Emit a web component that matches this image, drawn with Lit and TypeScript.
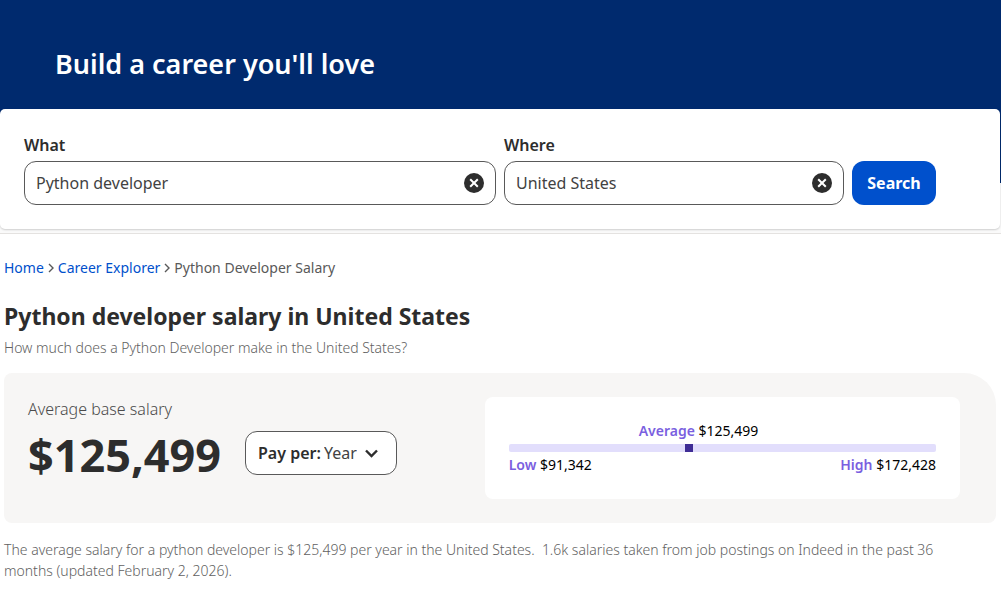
import { LitElement, html, css } from "lit";
import { customElement, state } from "lit/decorators.js";

const clearIcon = html`<svg class="clear-icon" viewBox="0 0 20 20" aria-hidden="true">
  <circle cx="10" cy="10" r="10" />
  <path d="M6.2 6.2l7.6 7.6M13.8 6.2l-7.6 7.6" />
</svg>`;

const crumbIcon = html`<svg class="crumb-icon" viewBox="0 0 6 10" aria-hidden="true">
  <path d="M1 1l4 4-4 4" />
</svg>`;

@customElement("app-root")
export class AppRoot extends LitElement {
  @state() what = "Python developer";
  @state() where = "United States";

  low = 91342;
  average = 125499;
  high = 172428;

  static styles = css`
    :host {
      display: block;
      min-height: 100vh;
      background: #fff;
      color: #2d2d2d;
      font-family: "Noto Sans", "Open Sans", sans-serif;
      font-size: 14px;
      line-height: 21px;
    }
    * {
      box-sizing: border-box;
    }
    h1, h2, p, ol {
      margin: 0;
      padding: 0;
    }
    input, select, button {
      font: inherit;
      color: inherit;
      margin: 0;
    }
    .masthead {
      background: #fafafa;
      padding-bottom: 4px;
      border-bottom: 1px solid #e4e2e0;
    }
    .hero {
      background: #002a6e;
      color: #fff;
      padding: 44px 55px 99px;
    }
    .hero-title {
      font-size: 27px;
      line-height: 40px;
      font-weight: 650;
    }
    .search {
      position: relative;
      display: grid;
      grid-template-columns: 118fr 85fr auto;
      align-items: end;
      gap: 8px;
      margin: -74px 1px 0 0;
      padding: 24px 64px 24px 24px;
      background: #fff;
      border-radius: 5px;
      box-shadow: 0 1px 2px rgba(0, 0, 0, 0.18);
    }
    .field {
      min-width: 0;
    }
    .field-label {
      display: block;
      font-size: 16px;
      line-height: 24px;
      font-weight: 600;
      padding-bottom: 4px;
    }
    .box {
      display: flex;
      align-items: center;
      height: 44px;
      padding: 0 11px;
      background: #fff;
      border: 1px solid #595959;
      border-radius: 12px;
    }
    .box-input {
      flex: 1;
      min-width: 0;
      padding: 0;
      border: 0;
      outline: 0;
      background: none;
      font-size: 16px;
      line-height: 24px;
      color: #424242;
    }
    .clear {
      display: flex;
      padding: 0;
      border: 0;
      background: none;
      cursor: pointer;
    }
    .clear-icon {
      width: 20px;
      height: 20px;
      fill: #2d2d2d;
    }
    .clear-icon path {
      stroke: #fff;
      stroke-width: 2;
    }
    .submit {
      min-width: 84px;
      height: 44px;
      padding: 0 15px;
      border: 0;
      border-radius: 12px;
      background: #0050cc;
      color: #fff;
      font-size: 16px;
      font-weight: 700;
      cursor: pointer;
    }
    .content {
      padding: 23px 5px 16px 4px;
    }
    .crumbs {
      display: flex;
      align-items: center;
      gap: 4px;
      list-style: none;
      color: #595959;
    }
    .crumb {
      display: flex;
      align-items: center;
      gap: 4px;
    }
    .crumb-link {
      color: #0050cc;
      text-decoration: none;
    }
    .crumb-icon {
      width: 6px;
      height: 10px;
      fill: none;
      stroke: #595959;
      stroke-width: 1.4;
    }
    .title {
      margin-top: 20px;
      font-size: 23px;
      line-height: 36px;
      font-weight: 700;
    }
    .muted {
      color: #616161;
      font-weight: 340;
    }
    .subtitle {
      margin-top: 3px;
    }
    .summary {
      padding-right: 36px;
    }
    .panel {
      display: grid;
      grid-template-columns: 49fr 51fr;
      align-items: start;
      margin: 15px 0 16px;
      padding: 24px 36px 24px 24px;
      background: #f7f6f5;
      border-radius: 8px 32px 8px 8px;
    }
    .base-label {
      font-size: 16px;
      line-height: 24px;
      font-weight: 340;
      color: #4b4b4b;
    }
    .base-row {
      display: flex;
      align-items: flex-start;
      gap: 24px;
    }
    .amount {
      font-size: 45px;
      line-height: 68px;
      font-weight: 700;
    }
    .pay {
      display: flex;
      align-items: center;
      position: relative;
      height: 44px;
      margin-top: 10px;
      padding-left: 12px;
      background: #fff;
      border: 1px solid #595959;
      border-radius: 12px;
      font-size: 16px;
      line-height: 24px;
    }
    .pay-label {
      font-weight: 600;
    }
    .pay-select {
      appearance: none;
      height: 100%;
      padding: 0 39px 0 3px;
      border: 0;
      outline: 0;
      background: none;
      color: #424242;
    }
    .pay-chevron {
      position: absolute;
      right: 18px;
      width: 13px;
      height: 9px;
      fill: none;
      stroke: #2d2d2d;
      stroke-width: 2.4;
      pointer-events: none;
    }
    .range {
      padding: 24px;
      background: #fff;
      border-radius: 8px;
      color: #000;
      line-height: 20px;
    }
    .range-average {
      width: max-content;
      margin-left: calc(var(--average) - 50px);
    }
    .name {
      color: #7a5fe0;
      font-weight: 600;
    }
    .track {
      display: flex;
      height: 8px;
      margin: 3px 0;
      border-radius: 2px;
      background: #e2defc;
    }
    .marker {
      width: 8px;
      margin-left: calc(var(--average) - 4px);
      background: #3f2d95;
    }
    .range-ends {
      display: flex;
      justify-content: space-between;
    }
  `;

  private money(value: number) {
    return "$" + value.toLocaleString("en-US");
  }

  render() {
    const share = ((this.average - this.low) / (this.high - this.low)) * 100;
    const summary = `The average salary for a python developer is ${this.money(this.average)} per year in the United States.\u00a0 1.6k salaries taken from job postings on Indeed in the past 36 months (updated February 2, 2026).`;
    return html`
      <header class="masthead">
        <div class="hero"><h1 class="hero-title">Build a career you'll love</h1></div>
        <form class="search" @submit=${(e: Event) => e.preventDefault()}>
          <div class="field">
            <label class="field-label" for="what">What</label>
            <div class="box">
              <input class="box-input" id="what" type="text" .value=${this.what}
                @input=${(e: Event) => (this.what = (e.target as HTMLInputElement).value)} />
              <button class="clear" type="button" aria-label="Clear what" @click=${() => (this.what = "")}>${clearIcon}</button>
            </div>
          </div>
          <div class="field">
            <label class="field-label" for="where">Where</label>
            <div class="box">
              <input class="box-input" id="where" type="text" .value=${this.where}
                @input=${(e: Event) => (this.where = (e.target as HTMLInputElement).value)} />
              <button class="clear" type="button" aria-label="Clear where" @click=${() => (this.where = "")}>${clearIcon}</button>
            </div>
          </div>
          <button class="submit" type="submit">Search</button>
        </form>
      </header>
      <main class="content">
        <nav aria-label="Breadcrumb">
          <ol class="crumbs">
            <li class="crumb"><a class="crumb-link" href="#">Home</a>${crumbIcon}</li>
            <li class="crumb"><a class="crumb-link" href="#">Career Explorer</a>${crumbIcon}</li>
            <li class="crumb">Python Developer Salary</li>
          </ol>
        </nav>
        <h2 class="title">Python developer salary in United States</h2>
        <p class="subtitle muted">How much does a Python Developer make in the United States?</p>
        <section class="panel">
          <div>
            <p class="base-label">Average base salary</p>
            <div class="base-row">
              <div class="amount">${this.money(this.average)}</div>
              <div class="pay">
                <label class="pay-label" for="pay">Pay per:</label>
                <select class="pay-select" id="pay"><option>Year</option></select>
                <svg class="pay-chevron" viewBox="0 0 13 9" aria-hidden="true"><path d="M1 1.5l5.5 5.5L12 1.5" /></svg>
              </div>
            </div>
          </div>
          <div class="range" style="--average: ${share}%">
            <p class="range-average"><span class="name">Average</span> ${this.money(this.average)}</p>
            <div class="track"><div class="marker"></div></div>
            <div class="range-ends">
              <p><span class="name">Low</span> ${this.money(this.low)}</p>
              <p><span class="name">High</span> ${this.money(this.high)}</p>
            </div>
          </div>
        </section>
        <p class="summary muted">${summary}</p>
      </main>
    `;
  }
}
